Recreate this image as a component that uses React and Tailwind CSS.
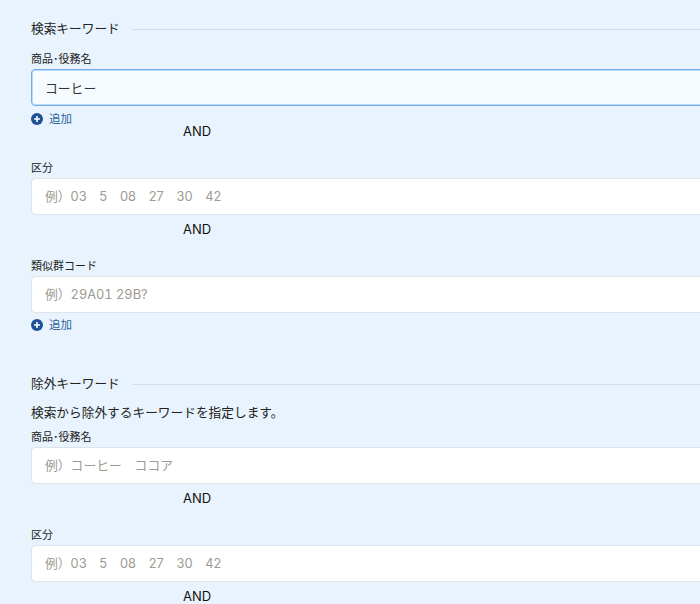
const font = { fontFamily: 'Inter, "Noto Sans CJK JP", sans-serif' };

const PlusIcon = () => (
    <svg width="12" height="12" viewBox="0 0 12 12">
        <circle cx="6" cy="6" r="6" fill="#1f5199" />
        <path d="M3 6h6M6 3v6" stroke="#fff" strokeWidth="1.6" />
    </svg>
);

const Heading = ({ children, className }) => (
    <div className={`flex items-center h-5 ${className}`}>
        <h2 className="text-[12.7px] leading-5 text-[#222]">{children}</h2>
        <div className="flex-1 h-px bg-[#d5dce4] ml-3"></div>
    </div>
);

const Field = ({ label, placeholder, value, raised, className }) => (
    <div className={className}>
        <label className="block text-[11px] leading-4 text-[#222]">{label}</label>
        {value ? (
            <input
                readOnly
                value={value}
                className="block w-full h-[37px] mt-[2px] px-[13px] text-[12.8px] text-[#333] bg-[#f5fbff] border border-[#74ade6] shadow-[inset_0_0_0_1px_#b4dcfb] rounded-[4px] outline-none"
            />
        ) : (
            <input
                readOnly
                placeholder={placeholder}
                className={`block w-full h-[37px] mt-[2px] px-[13px] ${raised ? "pb-[1px]" : "tabular-nums"} text-[12.8px] bg-white border border-[#dde3ea] rounded-[4px] outline-none placeholder:text-[#9d9a92]`}
            />
        )}
    </div>
);

const AddLink = ({ className }) => (
    <div className={`flex items-center gap-[6px] h-4 ${className}`}>
        <PlusIcon />
        <span className="text-[11.5px] leading-4 text-[#2a629f]">追加</span>
    </div>
);

const And = ({ className }) => (
    <div className={`ml-[152px] text-[13px] leading-4 text-[#111] ${className}`}>AND</div>
);

export default function App() {
    return (
        <div className="w-[700px] h-[604px] overflow-hidden bg-[#e8f3fd]" style={font}>
            <div className="w-[800px] pl-[31px] pt-[19px]">
                <Heading>検索キーワード</Heading>
                <Field className="mt-[12px]" label="商品･役務名" value="コーヒー" />
                <AddLink className="mt-[5px]" />
                <And className="-mt-[4px]" />
                <Field className="mt-[21px]" raised label="区分" placeholder="例）03　5　08　27　30　42" />
                <And className="mt-[6px]" />
                <Field className="mt-[21px]" label="類似群コード" placeholder="例）29A01 29B?" />
                <AddLink className="mt-[4px]" />

                <Heading className="mt-[41px]">除外キーワード</Heading>
                <p className="mt-[9px] text-[12.7px] leading-[20px] text-[#222]">検索から除外するキーワードを指定します。</p>
                <Field className="mt-[6px]" raised label="商品･役務名" placeholder="例）コーヒー　ココア" />
                <And className="mt-[6px]" />
                <Field className="mt-[21px]" raised label="区分" placeholder="例）03　5　08　27　30　42" />
                <And className="mt-[6px]" />
            </div>
        </div>
    );
}
